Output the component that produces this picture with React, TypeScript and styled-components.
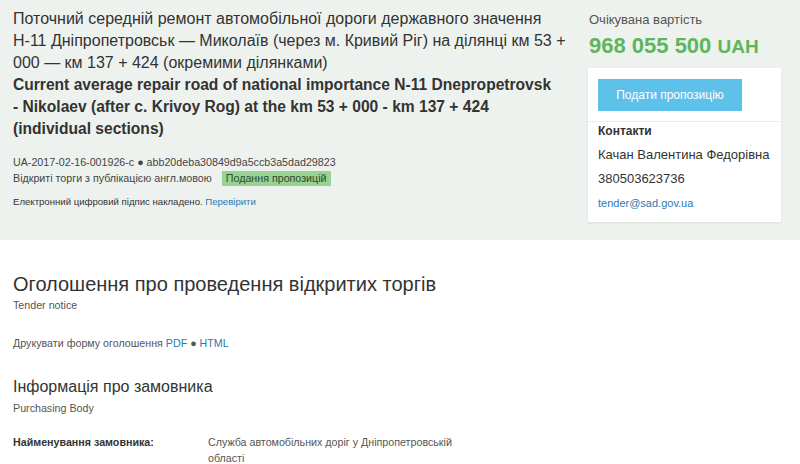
import React from "react";
import styled, { createGlobalStyle } from "styled-components";

const GlobalStyle = createGlobalStyle`
  html, body {
    margin: 0;
    padding: 0;
    background: #fff;
    font-family: "Liberation Sans", Arial, sans-serif;
    color: #333;
  }
  a {
    text-decoration: none;
  }
`;

const Header = styled.div`
  background: #eef2ef;
  height: 240px;
  display: flex;
  padding: 0 19px 0 13px;
  box-sizing: border-box;
`;

const MainCol = styled.div`
  flex: 1;
  padding-top: 8px;
`;

const Title = styled.h1`
  margin: 0;
  font-size: 16px;
  line-height: 22px;
  font-weight: normal;
  color: #333;
  white-space: nowrap;
`;

const TitleEn = styled.div`
  font-weight: bold;
  font-size: 15.6px;
`;

const Meta = styled.div`
  margin-top: 14px;
  font-size: 10.7px;
  line-height: 16px;
  color: #444;
`;

const Badge = styled.span`
  background: #98d393;
  color: #2d4a2d;
  padding: 1px 4px 2px;
  margin-left: 10px;
`;

const Signature = styled.div`
  margin-top: 10px;
  font-size: 9.6px;
  color: #333;
`;

const Link = styled.a`
  color: #2a7ab0;
`;

const SideCol = styled.div`
  width: 193px;
  padding-top: 12px;
`;

const PriceLabel = styled.div`
  font-size: 13px;
  color: #555;
  padding-left: 1px;
`;

const Price = styled.div`
  font-size: 22px;
  font-weight: bold;
  color: #5cb75c;
  margin-top: 6px;
  padding-left: 1px;

  span {
    font-size: 19px;
  }
`;

const Card = styled.div`
  margin-top: 9px;
  background: #fff;
  box-shadow: 0 1px 2px rgba(0, 0, 0, 0.08);
  padding-bottom: 10px;
`;

const CardTop = styled.div`
  padding: 11px 10px 10px;
  border-bottom: 1px solid #eceeec;
`;

const ApplyButton = styled.button`
  width: 144px;
  height: 32px;
  border: none;
  background: #5dc1ea;
  color: #fff;
  font-family: inherit;
  font-size: 12px;
`;

const Contacts = styled.div`
  padding: 1px 10px 0;
  font-size: 12px;
  color: #333;
`;

const ContactsTitle = styled.div`
  font-weight: bold;
  line-height: 16px;
`;

const ContactLine = styled.div<{ $small?: boolean }>`
  margin-top: ${(p) => (p.$small ? "8px" : "7px")};
  font-size: ${(p) => (p.$small ? "11px" : "13px")};
  line-height: 17px;
`;

const Body = styled.div`
  padding: 32px 13px 0;
`;

const SectionTitle = styled.h2<{ $size: number }>`
  margin: 0;
  font-weight: normal;
  font-size: ${(p) => p.$size}px;
  line-height: 24px;
  color: #333;
`;

const Sub = styled.div`
  font-size: 10.7px;
  color: #555;
  margin-top: 3px;
`;

const PrintLine = styled.div`
  font-size: 10.7px;
  color: #555;
  margin: 26px 0 26px;
`;

const Row = styled.div`
  display: grid;
  grid-template-columns: 195px 250px;
  margin-top: 20px;
  font-size: 10.7px;
  line-height: 16px;
`;

const RowLabel = styled.div`
  font-weight: bold;
  color: #333;
`;

const RowValue = styled.div`
  color: #555;
`;

export default function App() {
  return (
    <>
      <GlobalStyle />
      <Header>
        <MainCol>
          <Title>
            Поточний середній ремонт автомобільної дороги державного значення
            <br />
            Н-11 Дніпропетровськ — Миколаїв (через м. Кривий Ріг) на ділянці км 53 +
            <br />
            000 — км 137 + 424 (окремими ділянками)
            <TitleEn>
              Current average repair road of national importance N-11 Dnepropetrovsk
              <br />
              - Nikolaev (after c. Krivoy Rog) at the km 53 + 000 - km 137 + 424
              <br />
              (individual sections)
            </TitleEn>
          </Title>
          <Meta>
            <div>UA-2017-02-16-001926-c ● abb20deba30849d9a5ccb3a5dad29823</div>
            <div>
              Відкриті торги з публікацією англ.мовою
              <Badge>Подання пропозицій</Badge>
            </div>
          </Meta>
          <Signature>
            Електронний цифровий підпис накладено. <Link href="#">Перевірити</Link>
          </Signature>
        </MainCol>
        <SideCol>
          <PriceLabel>Очікувана вартість</PriceLabel>
          <Price>
            968 055 500 <span>UAH</span>
          </Price>
          <Card>
            <CardTop>
              <ApplyButton>Подати пропозицію</ApplyButton>
            </CardTop>
            <Contacts>
              <ContactsTitle>Контакти</ContactsTitle>
              <ContactLine>Качан Валентина Федорівна</ContactLine>
              <ContactLine>380503623736</ContactLine>
              <ContactLine $small>
                <Link href="#">tender@sad.gov.ua</Link>
              </ContactLine>
            </Contacts>
          </Card>
        </SideCol>
      </Header>
      <Body>
        <SectionTitle $size={20}>Оголошення про проведення відкритих торгів</SectionTitle>
        <Sub>Tender notice</Sub>
        <PrintLine>
          Друкувати форму оголошення <Link href="#">PDF</Link> ●{" "}
          <Link href="#">HTML</Link>
        </PrintLine>
        <SectionTitle $size={16}>Інформація про замовника</SectionTitle>
        <Sub>Purchasing Body</Sub>
        <Row>
          <RowLabel>Найменування замовника:</RowLabel>
          <RowValue>Служба автомобільних доріг у Дніпропетровській області</RowValue>
        </Row>
      </Body>
    </>
  );
}
